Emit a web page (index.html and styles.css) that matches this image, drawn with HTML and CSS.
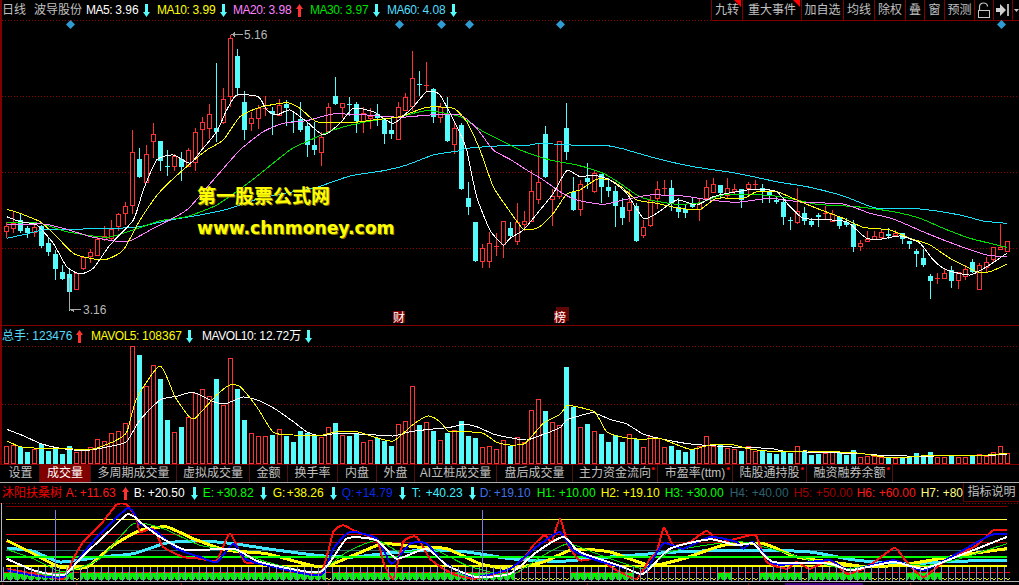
FILE: index.html
```html
<!DOCTYPE html>
<html lang="zh">
<head>
<meta charset="utf-8">
<title>波导股份 日线</title>
<link rel="stylesheet" href="styles.css">
</head>
<body>
<svg class="defs" width="0" height="0" aria-hidden="true">
  <symbol id="up" viewBox="0 0 7 13"><path d="M3.5 0 7 5H5V13H2V5H0Z"/></symbol>
  <symbol id="down" viewBox="0 0 7 13"><path d="M2 0H5V8H7L3.5 13 0 8H2Z"/></symbol>
  <symbol id="gem" viewBox="0 0 9 9"><path d="M4.5 0 9 4.5 4.5 9 0 4.5Z"/></symbol>
</svg>
<main class="terminal">
  <div class="edge"></div>

  <header class="top-bar">
    <div class="legend main-legend">
      <span class="plain period">日线</span>
      <span class="plain stock">波导股份</span>
      <span class="item w71 c-white"><b>MA5:</b><i>3.96</i><svg class="arrow dn"><use href="#down"/></svg></span>
      <span class="item w76 c-yellow"><b>MA10:</b><i>3.99</i><svg class="arrow dn"><use href="#down"/></svg></span>
      <span class="item w77 c-pink"><b>MA20:</b><i>3.98</i><svg class="arrow upc"><use href="#up"/></svg></span>
      <span class="item w77 c-green"><b>MA30:</b><i>3.97</i><svg class="arrow dn"><use href="#down"/></svg></span>
      <span class="item w77 c-sky"><b>MA60:</b><i>4.08</i><svg class="arrow dn"><use href="#down"/></svg></span>
    </div>
    <nav class="toolbar">
      <span class="tool flag">九转</span>
      <span class="tool flag">重大事件</span>
      <span class="tool">加自选</span>
      <span class="tool">均线</span>
      <span class="tool">除权</span>
      <span class="tool">叠</span>
      <span class="tool">窗</span>
      <span class="tool">预测</span>
      <span class="tool"><svg class="icon" width="14" height="16" viewBox="0 0 14 16"><path d="M2.5 8V4.5a4 3.5 0 0 1 8 0" fill="none" stroke="#c8c8c8" stroke-width="1.2"/><rect x="1.5" y="8.5" width="11" height="7" fill="none" stroke="#c8c8c8"/></svg></span>
      <span class="tool"><svg class="icon" width="14" height="12" viewBox="0 0 14 12"><path d="M0 4H4V0L10 6 4 12V8H0Z" fill="#d0d0d0"/><rect x="11" y="0" width="2" height="12" fill="#b0b0b0"/></svg></span>
      <span class="tool end"><svg class="icon" width="5" height="3" viewBox="0 0 5 3"><path d="M0 0H5L2.5 3Z" fill="#c0c0c0"/></svg></span>
    </nav>
  </header>

  <section class="price-panel">
    <svg class="chart price" width="1019" height="306" viewBox="0 20 1019 306">
      <g class="grid">
        <line x1="2" x2="712" y1="20.5" y2="20.5"/>
        <line x1="2" x2="1019" y1="96.5" y2="96.5"/>
        <line x1="2" x2="1019" y1="172.5" y2="172.5"/>
        <line x1="2" x2="1019" y1="248.5" y2="248.5"/>
      </g>
      <line class="rule" x1="712" x2="1019" y1="20.5" y2="20.5"/>
      <line class="rule" x1="0" x2="1019" y1="325.5" y2="325.5"/>
      <g class="gems">
        <use href="#gem" x="66" y="20" width="9" height="9"/>
        <use href="#gem" x="395" y="20" width="9" height="9"/>
        <use href="#gem" x="437" y="20" width="9" height="9"/>
        <use href="#gem" x="465" y="20" width="9" height="9"/>
        <use href="#gem" x="556" y="20" width="9" height="9"/>
        <use href="#gem" x="997" y="20" width="9" height="9"/>
      </g>
      <g id="candles"></g>
      <g id="averages"></g>
      <g class="mark">
        <path d="M231 34.5 235 32V34H243V35H235V37Z"/>
        <path d="M69 278H70V309H81V310H74V312L69 309.5Z"/>
      </g>
      <text class="mark-text" x="244" y="39">5.16</text>
      <text class="mark-text" x="83" y="314">3.16</text>
      <rect class="badge-back" x="556" y="307" width="13" height="14"/>
      <rect class="badge" x="393" y="311" width="12" height="12"/>
      <rect class="badge" x="554" y="311" width="12" height="12"/>
      <text class="badge-text" x="393" y="322">财</text>
      <text class="badge-text" x="554" y="322">榜</text>
    </svg>
    <div class="watermark">
      <p class="wm-cn">第一股票公式网</p>
      <p class="wm-en">www.chnmoney.com</p>
    </div>
  </section>

  <div class="legend vol-legend">
    <span class="item w89 c-sky"><b class="cjk">总手:</b><i>123476</i><svg class="arrow upc"><use href="#up"/></svg></span>
    <span class="item w111 c-yellow"><b>MAVOL5:</b><i>108367</i><svg class="arrow dn"><use href="#down"/></svg></span>
    <span class="item c-white"><b>MAVOL10:</b><i>12.72万</i><svg class="arrow dn"><use href="#down"/></svg></span>
  </div>

  <svg class="chart volume" width="1019" height="119" viewBox="0 346 1019 119">
    <g class="grid">
      <line x1="2" x2="1019" y1="346.5" y2="346.5"/>
      <line x1="2" x2="1019" y1="404.5" y2="404.5"/>
    </g>
    <g id="bars"></g>
    <g id="vol-lines"></g>
    <line class="rule" x1="0" x2="1019" y1="464.5" y2="464.5"/>
  </svg>

  <nav class="tabs">
    <span class="tab">设置</span>
    <span class="tab on">成交量</span>
    <span class="tab">多周期成交量</span>
    <span class="tab">虚拟成交量</span>
    <span class="tab">金额</span>
    <span class="tab">换手率</span>
    <span class="tab">内盘</span>
    <span class="tab">外盘</span>
    <span class="tab">AI立桩成交量</span>
    <span class="tab">盘后成交量</span>
    <span class="tab dot">主力资金流向</span>
    <span class="tab dot">市盈率(ttm)</span>
    <span class="tab dot">陆股通持股</span>
    <span class="tab dot">融资融券余额</span>
  </nav>

  <div class="ind-row">
    <div class="legend ind-legend">
      <span class="plain ind-name">沐阳扶桑树</span>
      <span class="item w68 c-red"><b>A:</b><i>+11.63</i><svg class="arrow upc"><use href="#up"/></svg></span>
      <span class="item w69 c-white"><b>B:</b><i>+20.50</i><svg class="arrow dn"><use href="#down"/></svg></span>
      <span class="item w70 c-lime"><b>E:</b><i>+30.82</i><svg class="arrow dn"><use href="#down"/></svg></span>
      <span class="item w69 c-yellow"><b>G:</b><i>+38.26</i><svg class="arrow dn"><use href="#down"/></svg></span>
      <span class="item w70 c-blue"><b>Q:</b><i>+14.79</i><svg class="arrow dn"><use href="#down"/></svg></span>
      <span class="item w68 c-cyan"><b>T:</b><i>+40.23</i><svg class="arrow dn"><use href="#down"/></svg></span>
      <span class="item w57 c-royal"><b>D:</b><i>+19.10</i></span>
      <span class="item long w64 c-lime"><b>H1:</b><i>+10.00</i></span>
      <span class="item long w64 c-yellow"><b>H2:</b><i>+19.10</i></span>
      <span class="item long w65 c-lime"><b>H3:</b><i>+30.00</i></span>
      <span class="item long w64 c-teal"><b>H4:</b><i>+40.00</i></span>
      <span class="item long w63 c-maroon"><b>H5:</b><i>+50.00</i></span>
      <span class="item long w64 c-red"><b>H6:</b><i>+60.00</i></span>
      <span class="item long c-cream"><b>H7:</b><i>+80</i></span>
    </div>
    <button class="explain" type="button">指标说明</button>
  </div>

  <svg class="chart indicator" width="1019" height="82" viewBox="0 503 1019 82">
    <g class="grid"><line x1="0" x2="1019" y1="503.5" y2="503.5"/></g>
    <line class="h dark" x1="6" x2="1007" y1="506.5" y2="506.5"/>
    <line class="h yel" x1="6" x2="1007" y1="519.5" y2="519.5"/>
    <line class="h red" x1="6" x2="1007" y1="534.5" y2="534.5"/>
    <line class="h dim" x1="6" x2="1007" y1="542.5" y2="542.5"/>
    <line class="h teal" x1="6" x2="1007" y1="550.5" y2="550.5"/>
    <g id="ind-low"></g>
    <line class="h green" x1="6" x2="1007" y1="557" y2="557"/>
    <line class="h band" x1="6" x2="1007" y1="566" y2="566"/>
    <g id="foot"></g>
    <g id="ind-lines"></g>
    <g id="comb"></g>
    <line class="cursor" x1="55.5" x2="55.5" y1="510" y2="581"/>
    <line class="cursor" x1="482.5" x2="482.5" y1="510" y2="581"/>
    <line class="frame" x1="1.5" x2="1.5" y1="503" y2="582"/>
    <line class="frame" x1="0" x2="1019" y1="581.5" y2="581.5"/>
    <rect class="purple" x="785" y="583" width="78" height="2"/>
    <g class="ticks">
      <line x1="2.5" x2="2.5" y1="583" y2="585"/>
      <line x1="76.5" x2="76.5" y1="583" y2="585"/>
      <line x1="181.5" x2="181.5" y1="583" y2="585"/>
      <line x1="328.5" x2="328.5" y1="583" y2="585"/>
      <line x1="587.5" x2="587.5" y1="583" y2="585"/>
      <line x1="748.5" x2="748.5" y1="583" y2="585"/>
      <line x1="910.5" x2="910.5" y1="583" y2="585"/>
    </g>
  </svg>
</main>
<script src="chart.js"></script>
</body>
</html>
```
FILE: styles.css
```css
* { box-sizing: border-box; margin: 0; padding: 0; }
html, body { background: #000; overflow: hidden; }
body { font: 12px/1 "Liberation Sans", "Noto Sans CJK SC", sans-serif; color: #c0c0c0; }
.defs { position: absolute; }
.terminal { position: relative; width: 1019px; height: 585px; display: flex; flex-direction: column; background: #000; overflow: hidden; }
.edge { position: absolute; left: 0; top: 0; width: 2px; height: 465px; background: #800000; }
.chart { display: block; flex: none; }
.chart * { shape-rendering: crispEdges; }

.top-bar { height: 20px; flex: none; display: flex; justify-content: space-between; }
.legend { display: flex; align-items: center; white-space: nowrap; overflow: hidden; padding-left: 2px; }
.main-legend { height: 20px; }
.period { width: 32px; }
.stock { width: 52px; }
.item { display: flex; align-items: center; flex: none; }
.item b { font-weight: 400; letter-spacing: -.45px; margin-right: 3px; }
.item i { font-style: normal; }
.item .cjk { letter-spacing: 0; }
.arrow { width: 7px; height: 13px; margin-left: 4px; flex: none; }
.dn { fill: #54fcfc; }
.upc { fill: #ff3232; }
.w57 { width: 57px; } .w63 { width: 63px; } .w64 { width: 64px; } .w65 { width: 65px; }
.w68 { width: 68px; } .w69 { width: 69px; } .w70 { width: 70px; } .w71 { width: 71px; }
.w76 { width: 76px; } .w77 { width: 77px; } .w89 { width: 89px; } .w111 { width: 111px; }
.c-white { color: #fff; }
.c-yellow { color: #ffff00; }
.c-pink { color: #ff80ff; }
.c-green { color: #00e000; }
.c-lime { color: #00ff00; }
.c-sky { color: #54dcfc; }
.c-cyan { color: #40f0ff; }
.c-red { color: #ff1818; }
.c-blue { color: #0a28e8; }
.c-royal { color: #4070e8; }
.c-teal { color: #2f6070; }
.c-maroon { color: #a00000; }
.c-cream { color: #ffff80; }

.toolbar { display: grid; grid-template-columns: 31px 59px 42px 31px 31px 19px 20px 30px 19px 19px 6px; height: 20px; border-left: 1px solid #800000; }
.tool { position: relative; display: flex; align-items: center; justify-content: center; border-right: 1px solid #800000; overflow: hidden; }
.tool.end { border-right: 0; }
.icon { display: block; }
.flag::after { content: ""; position: absolute; right: 1px; top: 0; border-top: 7px solid #ff0000; border-left: 7px solid transparent; }

.price-panel { position: relative; height: 306px; flex: none; }
.grid line { stroke: #900000; stroke-dasharray: 1 2; }
.rule { stroke: #800000; }
.gems { fill: #2f9bd0; }
.gems use { shape-rendering: geometricPrecision; }
.mark { fill: #a8a8a8; }
.mark-text { font-size: 12px; fill: #b8b8b8; }
.badge { fill: #800000; }
.badge-back { fill: #600808; }
.badge-text { font-size: 12px; fill: #fff; }
.watermark { position: absolute; left: 197px; top: 164px; color: #ffff00; font-weight: 700; text-shadow: 1px 1px 0 #8a7a00; }
.wm-cn { font-size: 19px; line-height: 25px; }
.wm-en { font-family: "DejaVu Sans", sans-serif; font-size: 17.2px; line-height: 20px; margin-top: 9px; }

.vol-legend { height: 20px; flex: none; }

.tabs { height: 18px; flex: none; display: grid; grid-template-columns: 38px 51px 86px 73px 38px 50px 39px 38px 82px 76px 85px 75px 74px 86px; padding-left: 2px; border-bottom: 1px solid #b0b0b0; }
.tab { position: relative; display: flex; align-items: center; justify-content: center; border-right: 1px solid #501010; padding-bottom: 1px; white-space: nowrap; }
.tab.on { background: #800000; color: #fff; }
.tab.dot::after { content: ""; position: absolute; right: 2px; top: 2px; width: 3px; height: 3px; border-radius: 50%; background: #ff0000; }

.ind-row { height: 20px; flex: none; display: flex; }
.ind-legend { flex: 1; min-width: 0; }
.ind-legend .item b { min-width: 14px; margin-right: 0; letter-spacing: 0; }
.ind-legend .long b { min-width: 22px; }
.ind-legend .arrow { margin-left: 6px; }
.ind-name { width: 64px; color: #f00000; }
.explain { width: 56px; height: 19px; flex: none; background: #000; color: #c0c0c0; font: inherit; border: 1px solid #600000; border-top: 0; border-right: 0; }

.h { stroke-width: 1; }
.dark { stroke: #800000; }
.yel { stroke: #ffff40; }
.red { stroke: #ff1010; }
.dim { stroke: #b01010; }
.teal { stroke: #2f6a70; }
.green { stroke: #00ff00; stroke-width: 2; }
.band { stroke: #ffff00; stroke-width: 2; }
.cursor { stroke: #7a80e0; }
.frame { stroke: #b8b8b8; }
.purple { fill: #400080; }
.ticks line { stroke: #900000; }
```
FILE: chart.js
```js
// [candle colour (0 red, 1 cyan), high, body top, body bottom, low] in pixel rows
var CANDLES = [
[0,222,226,231,237],[0,211,223,228,232],[1,213,220,231,232],[1,226,228,233,237],[0,222,227,232,236],
[1,225,226,246,247],[1,238,243,252,255],[1,250,254,269,279],[1,265,272,279,279],[1,269,274,292,310],
[0,273,273,289,289],[0,256,257,268,269],[0,249,252,256,262],[0,236,239,255,255],[0,226,236,239,240],
[0,220,229,238,240],[0,213,214,226,230],[0,202,206,213,224],[0,130,152,205,213],[1,148,159,177,177],
[0,145,154,182,182],[0,123,134,141,157],[1,141,141,161,170],[1,150,166,167,175],[0,154,156,166,170],
[1,152,159,167,180],[0,148,150,166,166],[0,128,132,162,170],[0,117,122,129,147],[0,104,114,128,138],
[1,63,128,132,141],[0,88,99,122,123],[0,35,38,96,106],[1,49,56,88,95],[1,91,102,130,139],
[0,112,118,123,130],[0,105,108,118,128],[0,96,108,109,115],[1,107,111,114,134],[0,99,105,115,115],
[1,100,104,108,125],[1,112,121,122,132],[1,102,119,130,131],[1,122,126,145,156],[1,122,145,150,154],
[0,132,137,152,165],[0,103,107,131,132],[1,77,96,104,104],[0,103,103,107,117],[1,97,104,105,115],
[1,102,104,121,132],[0,107,113,121,132],[0,108,116,118,128],[1,104,114,118,125],[1,118,120,134,143],
[1,118,130,134,138],[0,102,107,139,139],[0,93,97,110,110],[0,51,78,106,110],[1,71,84,85,95],
[0,62,85,86,91],[1,88,89,117,122],[0,103,107,117,122],[1,97,115,141,141],[0,121,128,144,153],
[1,123,125,189,189],[1,182,198,207,214],[1,222,222,261,261],[0,244,248,261,267],[0,232,243,261,267],
[0,233,246,247,255],[0,221,221,244,257],[1,222,228,236,238],[0,203,222,241,244],[0,211,221,224,230],
[0,170,191,221,221],[0,144,182,199,203],[1,126,134,177,177],[0,189,196,199,225],[0,141,141,196,198],
[1,103,128,152,159],[1,177,192,210,210],[0,180,184,209,215],[1,163,178,182,188],[0,170,173,191,192],
[1,174,174,187,202],[1,178,187,191,196],[1,186,191,206,226],[1,198,207,218,224],[0,190,202,210,221],
[1,203,206,241,241],[0,220,227,235,237],[0,196,200,225,226],[0,181,189,198,208],[0,180,188,189,195],
[1,180,188,204,210],[1,198,207,212,217],[1,205,209,213,217],[1,198,203,207,207],[0,198,203,209,220],
[0,180,187,198,198],[0,178,184,192,192],[1,185,185,193,198],[0,178,188,195,198],[0,184,189,191,193],
[1,189,189,200,207],[0,182,184,188,193],[0,180,184,185,189],[1,184,188,192,202],[1,190,192,196,202],
[1,197,200,202,203],[1,198,202,217,224],[1,217,220,221,229],[0,188,211,222,223],[1,207,213,221,224],
[1,218,221,225,226],[1,213,215,217,226],[0,206,213,214,218],[0,210,214,221,221],[1,217,217,226,228],
[1,218,222,225,226],[1,220,224,247,251],[0,240,243,246,250],[0,231,239,241,241],[0,231,236,239,239],
[0,230,232,237,239],[1,228,234,236,238],[0,230,233,235,236],[1,233,233,239,243],[1,241,241,244,248],
[1,249,251,254,266],[1,249,258,265,266],[1,274,276,281,298],[0,273,278,279,283],[0,268,273,278,278],
[1,266,270,281,287],[0,272,272,280,288],[0,265,269,276,279],[1,259,262,272,272],[0,263,265,289,289],
[0,257,262,267,271],[0,247,247,259,261],[0,224,247,249,249],[0,241,241,251,251]
];

// bar tops in 3x-zoom rows above the volume base; a negative value is a cyan bar
var VOLUME = [
364,360,-365,-381,372,-358,-378,-373,-387,-363,382,376,367,343,349,325,318,295,64,-90,
184,121,-162,-285,322,-306,276,204,192,214,-162,240,100,-192,-285,325,334,334,-330,313,
-333,-351,-318,-325,-334,337,307,-294,330,-333,-325,352,345,-340,-348,-363,298,289,184,-300,
292,-318,346,-324,315,-288,-333,-339,367,364,373,346,-364,
337,352,256,223,-258,292,301,-126,-245,307,-297,319,-327,-351,-330,-351,328,-342,367,334,
338,367,-363,-375,-381,-373,364,334,364,-360,370,373,-378,364,378,-375,-384,-387,-378,-384,
364,-378,-390,-387,385,379,-385,-390,-375,397,393,393,397,-397,400,-397,-397,-384,-393,-381,
396,396,-393,396,396,-393,388,393,382,364,384
];

// a curve is a list of [origin x, origin y, x, y, x, y ...] with points in 3x-zoom units
var AVERAGES = [
 ["#18e0f8",[[0,150, 20,265,80,252,130,240,250,237,350,235,420,230,500,212,600,195,680,178,780,145,880,125,950,112,1050,78,1150,62,1220,45,1300,15,1380,2],[0,0, 1400,445,1530,436],[510,0, 55,436,75,432,130,432,200,436,285,436,345,448],[510,150, 350,0,450,28,550,50,680,70,800,95,900,112,1000,138,1100,175,1230,177,1350,195,1420,213,1490,220]]],
 ["#00e000",[[0,150, 20,218,120,220,200,245,320,262,400,240,480,212,560,200,650,165,750,95,870,0],[0,0, 920,425,1000,390,1100,365,1200,350,1280,332,1380,350,1450,395,1530,435],[510,150, 30,0,120,30,200,45,280,70,330,100,380,135,420,150,500,163,570,158,640,135,760,135,840,145,920,163,1040,170,1160,187,1230,205,1300,235,1380,265,1490,292]]],
 ["#ff80ff",[[0,150, 20,225,130,222,200,238,280,262,380,275,460,235,560,180,640,90,720,0],[0,0, 790,395,850,370,920,362,1000,342,1100,345,1200,352,1290,345,1380,345,1430,385,1480,450],[510,150, 0,28,50,60,100,90,150,125,200,150,280,163,340,150,420,135,520,138,600,150,680,157,780,145,880,157,1000,162,1080,190,1150,207,1250,250,1340,285,1430,315,1490,320]]],
 ["#ffff00",[[0,150, 20,178,60,190,120,215,160,250,220,310,270,325,320,328,370,300,420,210,480,125,560,50,620,0],[0,0, 670,420,720,350,780,322,860,308,900,325,950,365,1050,368,1120,360,1200,350,1280,322,1360,325,1400,365,1440,450],[0,150, 1480,110,1530,185],[510,150, 40,237,85,233,130,190,170,132,210,120,260,88,300,90,340,115,380,150,440,160,510,175,570,178,620,145,700,145,740,125,800,125,860,150,920,175,1000,205,1060,232,1140,240,1200,265,1260,285,1320,325,1400,365,1440,365,1490,343]]],
 ["#ffffff",[[0,150, 20,200,60,215,110,225,160,280,200,350,240,372,280,355,330,285,400,210,430,120,470,30,520,15,570,40,605,0],[0,0, 650,395,680,330,710,285,775,290,800,330,830,345,870,330,920,365,970,405,1020,370,1060,325,1120,335,1180,370,1240,320,1280,275,1320,285,1380,400,1400,450],[0,150, 1430,140,1470,240,1510,285],[510,150, 0,265,40,240,90,180,130,130,170,62,210,80,250,75,300,90,350,130,400,205,440,190,500,150,560,165,610,140,680,125,740,118,800,125,840,170,880,205,940,208,1010,215,1040,240,1070,265,1110,268,1170,258,1230,280,1270,330,1310,360,1380,375,1430,350,1490,310]]]
];

var VOL_LINES = [
 ["#ffffff",[[0,325, 20,313,70,332,120,355,170,368,220,375,270,375,340,362,380,350,420,285,480,225,530,214,580,202,640,230,680,235,730,216,780,228,830,255,880,290,920,320,960,333,1010,325,1100,328,1180,333,1230,320,1300,312,1350,307,1390,298,1430,305,1480,327,1530,338],[510,325, 50,345,100,328,150,308,170,285,210,272,250,263,300,283,350,297,400,327,470,345,550,358,650,365,700,368,780,370,820,378,920,382,1050,386,1130,392,1280,393,1460,390,1490,388]]],
 ["#ffff00",[[0,325, 20,347,60,365,120,370,220,372,280,372,340,350,380,322,410,220,480,123,525,215,565,272,585,280,650,210,690,180,720,185,770,245,820,322,880,330,960,332,1010,320,1070,320,1120,335,1180,348,1240,298,1285,273,1320,290,1345,318,1400,320,1450,325,1490,352,1530,360],[510,325, 45,355,100,295,150,268,170,242,200,245,255,262,290,320,340,337,400,343,450,340,540,373,600,360,660,358,720,372,800,380,890,378,1040,384,1130,397,1200,396,1260,391,1400,392,1490,385]]]
];

var IND_LOW = [
 ["#40e8ff",3,[[0,462, 20,258,100,268,180,300,300,285,400,275,500,243,600,237,700,245,800,260,950,280,1060,285,1150,275,1270,265,1400,270,1530,290],[510,462, 150,298,300,285,500,270,720,265,900,270,1040,295,1200,305,1330,298,1490,295]]],
 ["#ffff00",3,[[0,462, 20,235,100,275,180,315,260,315,340,250,420,205,500,195,580,230,680,265,800,275,960,315,1060,280,1150,245,1250,255,1340,260,1440,305,1530,320],[510,462, 100,300,190,262,300,270,420,310,520,290,640,250,760,245,860,285,1000,305,1080,315,1200,305,1350,280,1490,260]]]
];

var IND_LINES = [
 ["#00e000",1,[[0,462, 20,262,100,290,190,330,300,290,400,185,490,200,600,250,700,265,800,300,950,330,1040,270,1130,235,1200,270,1300,262,1400,310,1530,340],[510,462, 100,280,175,245,260,275,400,320,480,270,620,245,700,240,800,265,1000,320,1130,300,1250,310,1350,290,1490,245]]],
 ["#ff1010",2,[[0,462, 20,320,100,335,190,350,220,290,250,240,300,190,350,128,380,128,410,170,420,210,460,200,490,255,550,285,600,290,650,295,690,215,735,300,780,300,850,320,960,335,1000,210,1030,190,1060,205,1130,235,1150,300,1180,350,1210,240,1250,225,1290,290,1330,320,1370,340,1420,350,1470,340,1530,320],[510,462, 40,290,70,250,105,220,125,240,150,170,175,250,210,295,260,290,320,325,380,350,420,290,440,270,462,197,490,250,540,240,590,207,630,240,720,220,740,225,770,300,830,320,860,300,900,320,960,295,1010,335,1060,320,1100,295,1155,258,1190,300,1240,345,1300,300,1360,270,1400,250,1450,205,1490,205]]],
 ["#0000ff",2,[[0,462, 20,325,100,340,190,345,240,285,300,215,380,140,400,150,420,185,470,210,530,260,600,285,650,300,700,245,735,290,800,310,960,340,1000,260,1050,210,1130,230,1175,305,1230,245,1280,245,1330,300,1420,345,1530,320],[510,462, 60,270,100,240,150,210,190,265,260,295,350,320,400,335,460,245,520,260,600,225,680,240,700,260,730,240,790,305,860,305,960,295,1020,325,1150,295,1240,325,1350,270,1440,220,1490,215]]],
 ["#ffffff",2,[[0,462, 20,290,100,325,190,340,240,290,320,215,380,158,405,165,420,180,480,225,560,265,700,260,780,300,960,330,1040,230,1130,235,1190,290,1280,260,1340,310,1430,345,1530,335],[510,462, 80,270,160,225,210,270,340,315,400,335,480,260,600,232,680,250,730,245,790,300,960,305,1020,325,1150,300,1240,320,1350,280,1490,225]]]
];

// ranges of bars that carry the green foot of the indicator
var GREEN = [[0,9],[11,45],[47,72],[81,89],[102,103],[108,113],[115,123],[129,133]];

function slot(i) { return 6 + 7 * i; }

function flatten(parts) {
  var pts = [];
  parts.forEach(function (p) {
    for (var k = 2; k < p.length; k += 2) pts.push([p[0] + p[k] / 3, p[1] + p[k + 1] / 3]);
  });
  return pts;
}

// gentle spline through the sampled points, so that the averages bend as they do on the chart
function smooth(pts) {
  var d = "M" + pts[0][0].toFixed(1) + " " + pts[0][1].toFixed(1);
  for (var i = 0; i < pts.length - 1; i++) {
    var a = pts[Math.max(i - 1, 0)], b = pts[i], c = pts[i + 1], e = pts[Math.min(i + 2, pts.length - 1)];
    d += "C" + (b[0] + (c[0] - a[0]) / 10).toFixed(1) + " " + (b[1] + (c[1] - a[1]) / 10).toFixed(1) + " " +
      (c[0] - (e[0] - b[0]) / 10).toFixed(1) + " " + (c[1] - (e[1] - b[1]) / 10).toFixed(1) + " " +
      c[0].toFixed(1) + " " + c[1].toFixed(1);
  }
  return d;
}

function curves(list, width) {
  return list.map(function (c) {
    var w = c.length === 3 ? c[1] : width, parts = c[c.length - 1];
    return '<path d="' + smooth(flatten(parts)) + '" fill="none" stroke="' + c[0] + '" stroke-width="' + w + '"/>';
  }).join("");
}

var RED = "#ff3232", CYAN = "#54fcfc";

document.getElementById("candles").innerHTML = CANDLES.map(function (c, i) {
  var x = slot(i), col = c[0] ? CYAN : RED, s = "";
  s += '<rect x="' + x + '" y="' + c[1] + '" width="1" height="' + (c[4] - c[1] + 1) + '" fill="' + col + '"/>';
  if (c[0]) {
    s += '<rect x="' + (x - 2) + '" y="' + c[2] + '" width="5" height="' + Math.max(c[3] - c[2], 1) + '" fill="' + col + '"/>';
  } else if (c[3] - c[2] <= 1) {
    s += '<rect x="' + (x - 2) + '" y="' + c[2] + '" width="5" height="1" fill="' + col + '"/>';
  } else {
    s += '<rect x="' + (x - 1.5) + '" y="' + (c[2] + 0.5) + '" width="4" height="' + (c[3] - c[2]) + '" fill="#000" stroke="' + col + '"/>';
  }
  return s;
}).join("");

document.getElementById("averages").innerHTML = curves(AVERAGES, 1);

document.getElementById("bars").innerHTML = VOLUME.map(function (v, i) {
  var x = slot(i), top = Math.round(325 + Math.abs(v) / 3), base = 464;
  if (v < 0) return '<rect x="' + (x - 2) + '" y="' + top + '" width="5" height="' + (base - top) + '" fill="' + CYAN + '"/>';
  return '<rect x="' + (x - 1.5) + '" y="' + (top + 0.5) + '" width="4" height="' + (base - top - 1) + '" fill="#000" stroke="' + RED + '"/>';
}).join("");

document.getElementById("vol-lines").innerHTML = curves(VOL_LINES, 1);

document.getElementById("ind-low").innerHTML = curves(IND_LOW);
document.getElementById("ind-lines").innerHTML = curves(IND_LINES);

var foot = "", comb = "";
for (var i = 0; i < 144; i++) {
  var x = slot(i), green = GREEN.some(function (r) { return i >= r[0] && i <= r[1]; });
  if (green) {
    foot += '<path d="M' + (x - 3) + ' 572H' + (x + 4) + 'V580H' + (x + 2) + 'L' + (x + 0.5) + ' 577 ' + (x - 1) + ' 580H' + (x - 3) + 'Z" fill="#00f000"/>';
  } else {
    foot += '<path d="M' + (x - 3) + ' 580 ' + (x - 1) + ' 578 ' + (x + 1) + ' 580 ' + (x + 3) + ' 578" fill="none" stroke="#e8e800"/>';
  }
  foot += '<rect x="' + (x - 2) + '" y="572" width="5" height="1" fill="#f01010"/>';
  comb += '<rect x="' + (x - 3) + '" y="567" width="1" height="14" fill="#8090d8"/>';
}
document.getElementById("foot").innerHTML = foot;
document.getElementById("comb").innerHTML = comb;
```
